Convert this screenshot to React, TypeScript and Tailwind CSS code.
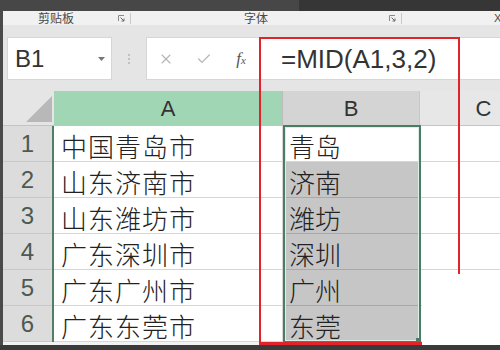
import { Check, X } from "lucide-react";

const rows = [
  { n: 1, a: "中国青岛市", b: "青岛" },
  { n: 2, a: "山东济南市", b: "济南" },
  { n: 3, a: "山东潍坊市", b: "潍坊" },
  { n: 4, a: "广东深圳市", b: "深圳" },
  { n: 5, a: "广东广州市", b: "广州" },
  { n: 6, a: "广东东莞市", b: "东莞" },
];

function Launcher() {
  return (
    <svg width="7" height="7" viewBox="0 0 7 7" className="shrink-0">
      <path d="M0.5 6V0.5H6" fill="none" stroke="#8a8a8a" strokeWidth="1" />
      <path d="M2.5 2.5L6 6M6 3.5V6H3.5" fill="none" stroke="#6a6a6a" strokeWidth="1" />
    </svg>
  );
}

export default function App() {
  return (
    <div className="relative flex h-[350px] w-[500px] flex-col overflow-hidden bg-[#e5e5e5] font-['Liberation_Sans','Noto_Sans_CJK_SC',sans-serif]">
      {/* window top */}
      <div className="flex h-[11px] shrink-0">
        <div className="w-[299px] bg-[#474747]" />
        <div className="flex-1 bg-[#363636]" />
      </div>

      <div className="flex min-h-0 flex-1">
        <div className="w-[3px] shrink-0 bg-[#4a4a4a]" />

        <div className="flex min-w-0 flex-1 flex-col">
          {/* ribbon group labels */}
          <div className="flex h-[14px] shrink-0 items-center bg-[#f1f1f1] text-[12px] leading-none text-[#4a4a4a] font-['Noto_Sans_CJK_SC',sans-serif]">
            <span className="ml-[35px] w-[36px] shrink-0">剪贴板</span>
            <span className="ml-[44px]"><Launcher /></span>
            <span className="ml-[5px] h-[11px] w-px shrink-0 bg-[#c9c9c9]" />
            <span className="ml-[113px] w-[24px] shrink-0">字体</span>
            <span className="ml-[121px]"><Launcher /></span>
            <span className="ml-[5px] h-[11px] w-px shrink-0 bg-[#c9c9c9]" />
            <span className="ml-[92px] shrink-0 font-['Liberation_Sans',sans-serif] text-[11px]">X</span>
          </div>

          {/* name box + formula bar */}
          <div className="flex shrink-0 pt-[12px] pb-[11px]">
            <div className="ml-[4px] flex h-[43px] w-[105px] shrink-0 items-center justify-between border border-[#d6d6d6] bg-white pl-[7px] pr-[6px]">
              <span className="text-[24px] leading-none text-[#333]">B1</span>
              <svg width="7" height="4" viewBox="0 0 7 4">
                <path d="M0 0H7L3.5 4Z" fill="#777" />
              </svg>
            </div>
            <div className="flex w-[34px] shrink-0 flex-col items-center justify-center gap-[2px]">
              <span className="h-[2px] w-[2px] rounded-full bg-[#b3b3b3]" />
              <span className="h-[2px] w-[2px] rounded-full bg-[#b3b3b3]" />
              <span className="h-[2px] w-[2px] rounded-full bg-[#b3b3b3]" />
            </div>
            <div className="flex h-[43px] flex-1 items-center border border-r-0 border-[#d6d6d6] bg-white">
              <span className="flex w-[38px] justify-center">
                <X size={16} strokeWidth={1.6} color="#b4b4b4" />
              </span>
              <span className="flex w-[38px] justify-center">
                <Check size={16} strokeWidth={1.8} color="#b4b4b4" />
              </span>
              <span className="flex w-[36px] justify-center font-['Liberation_Serif',serif] italic text-[#555]">
                <span className="text-[17px] leading-none">f</span>
                <span className="mt-[5px] text-[11px] leading-none">x</span>
              </span>
              <span className="pl-[22px] text-[26px] leading-none text-[#333]">=MID(A1,3,2)</span>
            </div>
          </div>

          {/* column headers */}
          <div className="flex h-[35px] shrink-0 border-b border-[#c4c4c4]">
            <div className="relative w-[51px] shrink-0 bg-[#e5e5e5]">
              <svg width="26" height="26" viewBox="0 0 26 26" className="absolute right-[2px] bottom-[3px]">
                <path d="M26 0V26H0Z" fill="#b8b8b8" />
              </svg>
            </div>
            <div className="flex w-[229px] shrink-0 items-center justify-center border-r border-[#bcbcbc] bg-[#a1d6b5] text-[22px] text-[#333]">
              A
            </div>
            <div className="flex w-[136px] shrink-0 items-center justify-center bg-[#d4d4d4] text-[22px] text-[#333]">
              B
            </div>
            <div className="flex w-[128px] shrink-0 items-center justify-center border-l border-[#c8c8c8] bg-[#e7e7e7] text-[22px] text-[#333]">
              C
            </div>
          </div>

          {/* rows */}
          {rows.map((r) => (
            <div key={r.n} className="flex h-[36px] shrink-0">
              <div className="flex w-[49px] shrink-0 items-center justify-center border-b border-[#c9c9c9] bg-[#dcdcdc] text-[24px] text-[#4b5a52]">
                {r.n}
              </div>
              <div className="w-[2px] shrink-0 bg-[#4f8067]" />
              <div className="flex w-[229px] shrink-0 items-center border-r border-b border-[#d6d6d6] bg-white pl-[7px] pt-[3px] text-[26px] font-light tracking-[1px] text-[#222] font-['Noto_Sans_CJK_SC',sans-serif]">
                {r.a}
              </div>
              <div
                className={`flex w-[136px] shrink-0 items-center border-b pl-[6px] pt-[3px] text-[26px] font-light text-[#222] font-['Noto_Sans_CJK_SC',sans-serif] ${
                  r.n === 1 ? "border-[#d6d6d6] bg-white" : "border-[#a9a9a9] bg-[#c6c6c6]"
                }`}
              >
                {r.b}
              </div>
              <div className="flex-1 border-b border-[#d6d6d6] bg-white" />
            </div>
          ))}
          <div className="flex-1 bg-[#f2f2f2]" />
        </div>
      </div>

      {/* window bottom */}
      <div className="h-[5px] shrink-0 bg-[#3a3a3a]" />

      {/* selection B1:B6 */}
      <div className="absolute left-[283px] top-[125px] h-[218px] w-[138px] border-2 border-[#4a7d64] shadow-[inset_0_0_0_1px_#dcefe6]" />
      <div className="absolute left-[416px] top-[338px] h-[5px] w-[5px] bg-[#4a7d64]" />

      {/* red annotation frame */}
      <div className="absolute left-[259px] top-[37px] h-[308px] w-[201px] border-2 border-b-[3px] border-[#e3232b]" />
      {/* white cover over the lower right cells */}
      <div className="absolute left-[422px] top-[274px] h-[71px] w-[78px] bg-white" />
    </div>
  );
}
